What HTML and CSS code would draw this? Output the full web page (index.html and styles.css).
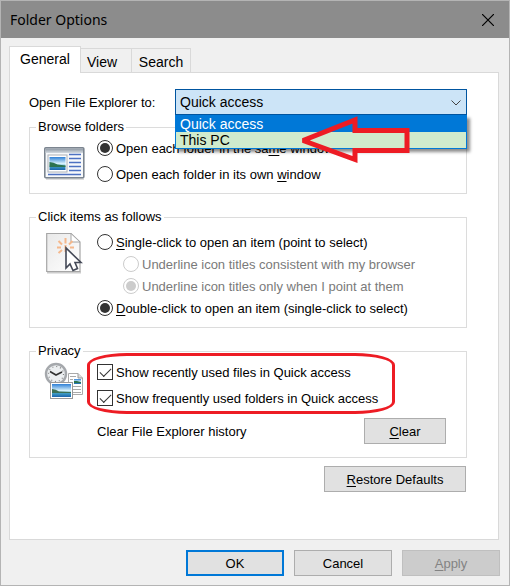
FILE: index.html
```html
<!DOCTYPE html>
<html lang="en">
<head>
<meta charset="utf-8">
<meta name="viewport" content="width=device-width, initial-scale=1">
<title>Folder Options</title>
<link rel="stylesheet" href="styles.css">
</head>
<body>
<main class="window">
  <header class="titlebar">
    <h1 class="title">Folder Options</h1>
    <button class="close" type="button" aria-label="Close">
      <svg width="12" height="12" viewBox="0 0 12 12"><path d="M0 0 12 12M12 0 0 12" stroke="#000" stroke-width="1.2"/></svg>
    </button>
  </header>

  <div class="tabs" role="tablist">
    <button class="tab tab-active" type="button" role="tab" aria-selected="true">General</button>
    <button class="tab" type="button" role="tab" aria-selected="false">View</button>
    <button class="tab" type="button" role="tab" aria-selected="false">Search</button>
  </div>

  <section class="panel" role="tabpanel">
    <div class="open-row">
      <label class="open-label" for="open-to">Open File Explorer to:</label>
      <div class="combo">
        <select class="combo-select" id="open-to">
          <option>Quick access</option>
          <option>This PC</option>
        </select>
        <svg class="combo-chevron" width="10" height="6" viewBox="0 0 10 6"><path d="M.5 .5 5 5 9.500 .5" fill="none" stroke="#444"/></svg>
        <ul class="combo-menu">
          <li class="combo-item combo-item-selected">Quick access</li>
          <li class="combo-item combo-item-marked">This PC</li>
        </ul>
        <svg class="arrow" width="112" height="48" viewBox="0 0 112 48"><path d="M5 24.500 57 4V14.500H109V34.500H57V43.500Z" fill="none" stroke="#ed1c24" stroke-width="5" stroke-linejoin="miter" stroke-miterlimit="2"/></svg>
      </div>
    </div>

    <fieldset class="group">
      <legend>Browse folders</legend>
      <div class="group-body">
        <svg class="group-icon" width="42" height="48" viewBox="0 0 42 48">
          <defs>
            <linearGradient id="sky" x2="0" y2="1"><stop offset="0" stop-color="#2f80d6"/><stop offset=".5" stop-color="#d5f0fb"/><stop offset=".6" stop-color="#a5d9ec"/><stop offset=".72" stop-color="#3f9cc4"/><stop offset="1" stop-color="#1a63ad"/></linearGradient>
            <linearGradient id="bar" x2="0" y2="1"><stop offset="0" stop-color="#8b95a1"/><stop offset="1" stop-color="#d5dbe1"/></linearGradient>
          </defs>
          <rect x="2" y="43" width="38" height="2" fill="#ddd"/>
          <rect x=".8" y="12.800" width="39" height="30" rx="1" fill="#f7f9fb" stroke="#7c8590" stroke-width="1.600"/>
          <path d="M1.500 13.500H39V18H1.500Z" fill="url(#bar)"/>
          <rect x="4" y="20" width="19" height="17" fill="#fff" stroke="#abb0b6"/>
          <rect x="5.500" y="22" width="16" height="13" fill="url(#sky)"/>
          <path d="M5.500 27q4 0 8 2.500l8 1v1.500h-16z" fill="#2c7350"/>
          <path d="M25 19.500H37M25 23.500H37M25 27.500H37M25 31.500H37M25 35.500H37M4 39.500H37" stroke="#4d71c2" stroke-width="1.500"/>
        </svg>
        <div class="choices">
          <label class="choice"><input class="radio" type="radio" name="browse" checked><span class="choice-text">Open each folder in the sa<u>m</u>e window</span></label>
          <label class="choice"><input class="radio" type="radio" name="browse"><span class="choice-text">Open each folder in its own <u>w</u>indow</span></label>
        </div>
      </div>
    </fieldset>

    <fieldset class="group group-click">
      <legend>Click items as follows</legend>
      <div class="group-body">
        <svg class="group-icon" width="42" height="48" viewBox="0 0 42 48">
          <defs><linearGradient id="paper" x2="1" y2="1"><stop offset="0" stop-color="#e9e9e9"/><stop offset="1" stop-color="#fff"/></linearGradient></defs>
          <path d="M3 41.500H37" stroke="#ccc" stroke-width="2"/>
          <path d="M2.700 2.500H27L36 11V40.500H2.700Z" fill="url(#paper)" stroke="#a6a6a6" stroke-width="1.200"/>
          <path d="M27 2.500V11H36Z" fill="#fff" stroke="#a6a6a6"/>
          <path d="M21.500 12.500V7M18 13.500 14.500 10M17 16.500H13M18 19 14.500 22M25 13.500 28.500 10M26 16.500H30M21.500 14V21" stroke="#f5b88c" stroke-width="2"/>
          <path d="M22 17V37L26 33 29 39.500 33.500 37.500 31 31.500H37Z" fill="#fff" stroke="#444957" stroke-width="1.600"/>
        </svg>
        <div class="choices choices-tight">
          <label class="choice"><input class="radio" type="radio" name="click"><span class="choice-text"><u>S</u>ingle-click to open an item (point to select)</span></label>
          <label class="choice choice-sub"><input class="radio" type="radio" name="underline" disabled><span class="choice-text">Underline icon titles consistent with my browser</span></label>
          <label class="choice choice-sub"><input class="radio" type="radio" name="underline" checked disabled><span class="choice-text">Underline icon titles only when I point at them</span></label>
          <label class="choice"><input class="radio" type="radio" name="click" checked><span class="choice-text"><u>D</u>ouble-click to open an item (single-click to select)</span></label>
        </div>
      </div>
    </fieldset>

    <fieldset class="group group-privacy">
      <legend>Privacy</legend>
      <div class="group-body">
        <svg class="group-icon" width="42" height="48" viewBox="0 0 42 48">
          <path d="M24.500 14.500H34L38.500 19V35.500H24.500Z" fill="#fff" stroke="#aaa"/>
          <path d="M34 14.500V19H38.500" fill="#ddd" stroke="#999"/>
          <path d="M26 17.500H32M26 20.500H29M26 23.500H29M26 27.500H37M26 30.500H37M29 33.500H37" stroke="#aaa"/>
          <rect x="30" y="20" width="7" height="5" fill="url(#sky)"/>
          <path d="M30 22h3l4 1v1h-7z" fill="#2c7350"/>
          <circle cx="12" cy="15" r="10" fill="#eceff1" stroke="#a5a8ac" stroke-width="2.400"/>
          <circle cx="12" cy="15" r="7.500" fill="none" stroke="#858585" stroke-width="1.200" stroke-dasharray="1 2.927"/>
          <path d="M6 12.500 12 16 18 13" fill="none" stroke="#333" stroke-width="1.600"/>
          <rect x="6.500" y="23.500" width="22" height="16" fill="#fff" stroke="#999"/>
          <rect x="8" y="25" width="19" height="13" fill="url(#sky)"/>
          <path d="M8 30q4 0 7 2.500l12 .5v1H8z" fill="#3c7055"/>
        </svg>
        <div class="choices">
          <label class="choice"><input class="check" type="checkbox" checked><span class="choice-text">Show recently used files in Quick access</span></label>
          <label class="choice"><input class="check" type="checkbox" checked><span class="choice-text">Show frequently used folders in Quick access</span></label>
          <div class="history">
            <span class="choice-text">Clear File Explorer history</span>
            <button class="button button-clear" type="button"><u>C</u>lear</button>
          </div>
          <div class="ring"></div>
        </div>
      </div>
    </fieldset>

    <div class="restore">
      <button class="button button-restore" type="button"><u>R</u>estore Defaults</button>
    </div>
  </section>

  <footer class="footer">
    <button class="button button-default" type="button">OK</button>
    <button class="button" type="button">Cancel</button>
    <button class="button" type="button" disabled><u>A</u>pply</button>
  </footer>
</main>
</body>
</html>
```

FILE: styles.css
```css
* {
  box-sizing: border-box;
}

body {
  margin: 0;
  color: #000;
  font: 13px/16px "Liberation Sans", Arial, sans-serif;
}

button,
select,
input {
  margin: 0;
  color: inherit;
  font: inherit;
}

u {
  text-decoration-thickness: 1px;
  text-underline-offset: 2px;
}

.window {
  display: flex;
  flex-direction: column;
  min-height: 100vh;
  border: 1px solid #b4b4b4;
  background: #f0f0f0;
}

.titlebar {
  display: flex;
  align-items: center;
  justify-content: space-between;
  height: 37px;
  padding: 0 10px 0 9px;
  background: #8c8c8c;
}

.title {
  margin: 0;
  font: 14px/20px "Noto Sans", "Open Sans", sans-serif;
}

.close {
  display: grid;
  place-items: center;
  width: 22px;
  height: 22px;
  padding: 0;
  border: 0;
  background: none;
}

.tabs {
  display: flex;
  align-items: flex-end;
  margin: 8px 10px 0 8px;
}

.tab {
  height: 24px;
  padding: 2px 6px 0;
  border: 1px solid #d9d9d9;
  border-bottom: 0;
  border-left: 0;
  background: #f0f0f0;
  font-size: 14px;
}

.tab:nth-child(2) {
  width: 51px;
  padding-right: 14px;
}

.tab:nth-child(3) {
  width: 59px;
}

.tab-active {
  z-index: 1;
  width: 72px;
  height: 27px;
  margin-bottom: -1px;
  padding: 0 0 2px;
  border-left: 1px solid #d9d9d9;
  background: #fff;
}

.panel {
  flex: 1;
  margin: 0 10px 0 8px;
  padding: 16px 31px 16px 19px;
  border: 1px solid #d9d9d9;
  background: #fff;
}

.open-row {
  display: flex;
  align-items: center;
  margin-bottom: 4px;
}

.open-label {
  width: 146px;
  padding-top: 2px;
}

.combo {
  position: relative;
  flex: 1;
}

.combo-select {
  display: block;
  width: 100%;
  height: 26px;
  padding: 0 4px;
  border: 1px solid #0055a0;
  border-radius: 0;
  background: #cce4f7;
  font-size: 14px;
  appearance: none;
}

.combo-chevron {
  position: absolute;
  top: 11px;
  right: 6px;
}

.combo-menu {
  position: absolute;
  z-index: 1;
  top: 26px;
  right: 0;
  left: 0;
  margin: 0;
  padding: 0;
  border: 1px solid #0078d7;
  list-style: none;
  font-size: 14px;
  box-shadow: 3px 3px 3px rgba(0, 0, 0, .45);
}

.combo-item {
  padding: 0 4px;
}

.combo-item-selected {
  background: #0078d7;
  color: #fff;
}

.combo-item-marked {
  background: #d0ebcd;
}

.arrow {
  position: absolute;
  z-index: 2;
  top: 27px;
  left: 123px;
}

.group {
  min-width: 0;
  margin: 0 0 15px;
  padding: 0 0 6px;
  border: 1px solid #dcdcdc;
}

.group legend {
  margin-left: 6px;
  padding: 0 2px;
}

.group-click {
  padding: 6px 0 8px;
}

.group-privacy {
  margin-bottom: 8px;
  padding-bottom: 13px;
}

.group-body {
  display: flex;
  align-items: flex-start;
  gap: 11px;
  padding: 0 20px 0 14px;
}

.group-icon {
  flex: none;
}

.choices {
  position: relative;
  flex: 1;
}

.choice {
  display: flex;
  align-items: center;
  gap: 3px;
  height: 26px;
}

.choices-tight .choice {
  height: 22px;
}

.choice-text {
  padding-top: 2px;
}

.choice-sub {
  padding-left: 26px;
  color: #7a7a7a;
}

.radio,
.check {
  flex: none;
  display: grid;
  place-items: center;
  width: 16px;
  height: 16px;
  border: 1px solid #333;
  background: #fff;
  appearance: none;
}

.radio {
  border-radius: 50%;
}

.radio:checked::before {
  width: 10px;
  height: 10px;
  border-radius: 50%;
  background: #333;
  content: "";
}

.radio:disabled {
  border-color: #ccc;
}

.radio:disabled:checked::before {
  background: #ccc;
}

.check:checked::before {
  width: 10px;
  height: 5px;
  margin-bottom: 3px;
  border: solid #333;
  border-width: 0 0 1px 1px;
  transform: rotate(-45deg);
  content: "";
}

.history {
  display: flex;
  align-items: center;
  justify-content: space-between;
  margin-top: 7px;
}

.ring {
  position: absolute;
  top: -6px;
  left: -10px;
  width: 308px;
  height: 61px;
  border: 3px solid #ed1c24;
  border-radius: 40px / 12px;
  pointer-events: none;
}

.button {
  width: 98px;
  height: 26px;
  padding: 2px 0 0;
  border: 1px solid #adadad;
  background: #e1e1e1;
}

.button:disabled {
  border-color: #bfbfbf;
  background: #ccc;
  color: #838383;
}

.button-clear {
  width: 82px;
}

.button-restore {
  width: 142px;
}

.button-default {
  border: 2px solid #0078d7;
}

.restore {
  display: flex;
  justify-content: flex-end;
  padding-right: 1px;
}

.footer {
  display: flex;
  justify-content: flex-end;
  gap: 10px;
  padding: 10px 9px 9px;
}
```
